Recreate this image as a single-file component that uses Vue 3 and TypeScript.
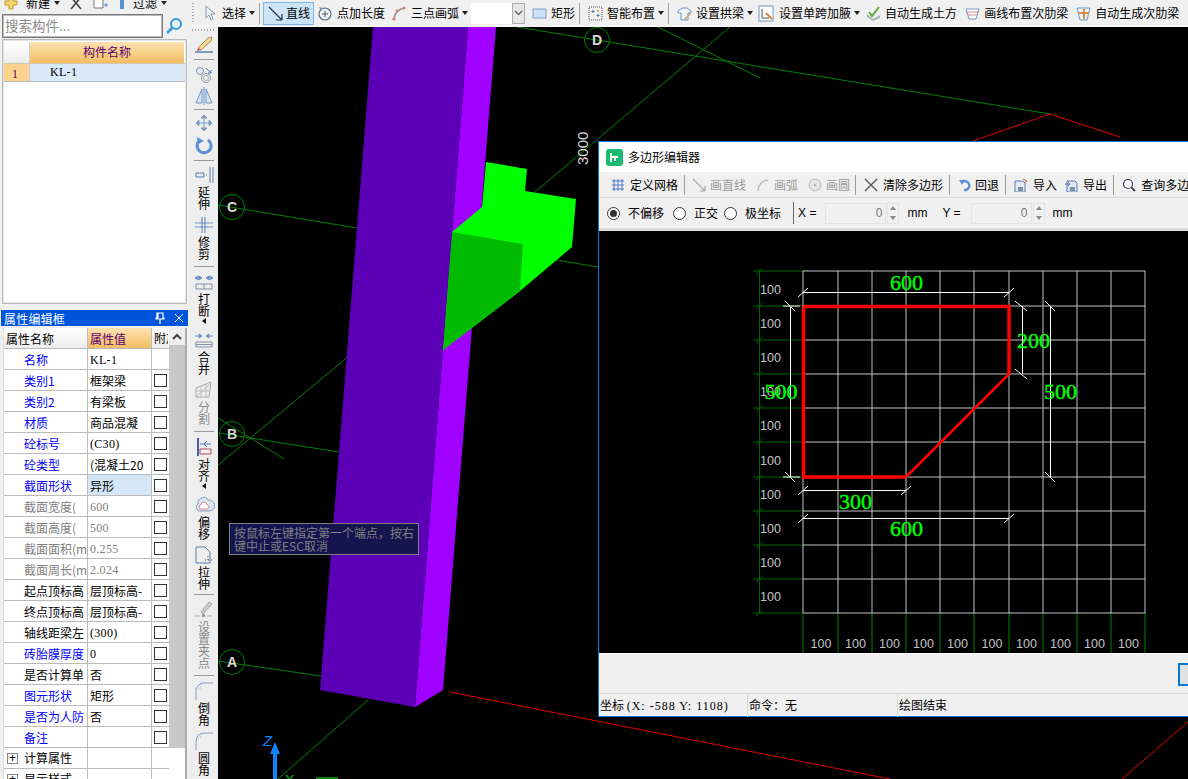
<script setup lang="ts">
const grid = (n: number, s: number, step: number) => Array.from({ length: n }, (_, i) => Math.round(s + i * step))
const gx = [803, 838, 872, 906, 940, 974, 1009, 1043, 1077, 1111, 1145]
const gy = [271, 306, 340, 374, 408, 442, 477, 511, 545, 579, 613]
const rowLabels = grid(10, 294, 34.1)
const colLabels = gx.slice(0, 10).map((x, i) => (x + gx[i + 1]) / 2)

type Row = { n: string; c: string; v: string; mono?: boolean; nocheck?: boolean; sel?: boolean }
const rows: Row[] = [
  { n: '名称', c: 'blue', v: 'KL-1', mono: true, nocheck: true },
  { n: '类别1', c: 'blue', v: '框架梁' },
  { n: '类别2', c: 'blue', v: '有梁板' },
  { n: '材质', c: 'blue', v: '商品混凝' },
  { n: '砼标号', c: 'blue', v: '(C30)', mono: true },
  { n: '砼类型', c: 'blue', v: '(混凝土20' },
  { n: '截面形状', c: 'blue', v: '异形', sel: true },
  { n: '截面宽度(', c: 'grey', v: '600', mono: true },
  { n: '截面高度(', c: 'grey', v: '500', mono: true },
  { n: '截面面积(m', c: 'grey', v: '0.255', mono: true },
  { n: '截面周长(m', c: 'grey', v: '2.024', mono: true },
  { n: '起点顶标高', c: '', v: '层顶标高-' },
  { n: '终点顶标高', c: '', v: '层顶标高-' },
  { n: '轴线距梁左', c: '', v: '(300)', mono: true },
  { n: '砖胎膜厚度', c: 'blue', v: '0', mono: true },
  { n: '是否计算单', c: '', v: '否' },
  { n: '图元形状', c: 'blue', v: '矩形' },
  { n: '是否为人防', c: 'blue', v: '否' },
  { n: '备注', c: 'blue', v: '' },
]

const ic = {
  brush: '<path d="M5 15 L15 5 L19 4 L18 8 L8 17Z" fill="#f4d9a0" stroke="#b98a4a"/><path d="M5 15l3 2-4 1z" fill="#c04a7a"/><path d="M2 19h18" stroke="#5a7fb0" stroke-width="1.5"/>',
  circles: '<circle cx="7" cy="8" r="3.5" fill="#dfe9f5" stroke="#8a96a5"/><circle cx="13" cy="15" r="4.5" fill="none" stroke="#8a96a5"/><circle cx="13" cy="15" r="2.5" fill="none" stroke="#a8b2bf"/><path d="M13 5l5 5m0-3v3h-3" fill="none" stroke="#4a78b8"/>',
  mirror: '<path d="M9 4v14H3zM13 4v14h6z" fill="#dbe6f5" stroke="#6f95c9"/><path d="M11 2v18" stroke="#6f95c9"/>',
  move: '<path d="M11 3v16M3 11h16M11 3l-3 3h6zM11 19l-3-3h6zM3 11l3-3v6zM19 11l-3-3v6z" fill="#6f95c9" stroke="#7f9cc4"/>',
  rotate: '<path d="M6 7a7 7 0 1 0 9-1" fill="none" stroke="#5b8fd6" stroke-width="3"/><path d="M4 3l1 7 6-3z" fill="#5b8fd6"/>',
  extend: '<path d="M3 9h8v4H3z" fill="none" stroke="#5a7fb0"/><path d="M13 11h2" stroke="#5a7fb0" stroke-dasharray="1 1"/><path d="M17 3v16M20 3v16" stroke="#5a7fb0"/>',
  trim: '<path d="M2 9h18M2 13h18" stroke="#6f95c9"/><path d="M9 3v16M12 3v16" stroke="#5a7fb0"/>',
  split: '<path d="M2 7h7M13 7h7M2 7l3-2v4zM9 7L6 5v4zM13 7l3-2v4zM20 7l-3-2v4z" fill="#6f95c9" stroke="#6f95c9"/><path d="M3 13h16v5H3zM11 13v5" fill="none" stroke="#7f8ea3"/>',
  merge: '<path d="M2 7h7M13 7h7M9 7L6 5v4zM13 7l3-2v4z" fill="#6f95c9" stroke="#6f95c9"/><path d="M3 13h16v5H3zM3 15.5h16" fill="none" stroke="#7f8ea3"/>',
  cut: '<path d="M3 18V9l15-6-2 15z" fill="#eee" stroke="#aaa"/><path d="M3 12h14M8 8v10M13 6v12M3 18L17 5" stroke="#bbb"/>',
  align: '<path d="M5 2v18" stroke="#4a5fb0" stroke-width="2"/><path d="M7 8h11M14 5l-3 3 3 3" fill="none" stroke="#4a7ac0"/><path d="M7 13h11v5H7z" fill="#eee" stroke="#b04a5a"/>',
  offset: '<path d="M6 17a4 4 0 0 1-1-7 5 5 0 0 1 4-6 4 4 0 0 1 6 2 5 5 0 0 1 2 11z" fill="#dbe6f5" stroke="#7f9cc4"/><path d="M8 15a2 2 0 0 1 0-4 3 3 0 0 1 6 0 2 2 0 0 1 0 4z" fill="#fff" stroke="#e08a80"/>',
  stretch: '<path d="M3 3h9l5 5v11H3z" fill="none" stroke="#5a7fb0"/><path d="M15 12v6M12 16h7" stroke="#444" stroke-dasharray="1 2"/>',
  grip: '<path d="M8 13L16 3l3 2-9 10z" fill="#ccc" stroke="#aaa"/><path d="M2 17h5M14 17h5" stroke="#aaa"/><rect x="9" y="15" width="3" height="3" fill="#999"/>',
  chamfer: '<path d="M3 20V8l5-5h12" fill="none" stroke="#7f9cc4"/><path d="M3 8h5V3" fill="none" stroke="#9fb8d8" stroke-dasharray="1 1"/>',
  fillet: '<path d="M3 20v-8Q3 3 12 3h8" fill="none" stroke="#7f9cc4"/><path d="M3 8h5V3" fill="none" stroke="#9fb8d8" stroke-dasharray="1 1"/>',
}

type V = { k: 'i' | 's'; svg?: string; t?: string; dim?: boolean; arrow?: boolean; cls?: string }
const vtools: V[] = [
  { k: 'i', svg: ic.brush },
  { k: 's' },
  { k: 'i', svg: ic.circles },
  { k: 'i', svg: ic.mirror },
  { k: 's', cls: 'tight' },
  { k: 'i', svg: ic.move },
  { k: 'i', svg: ic.rotate },
  { k: 's' },
  { k: 'i', svg: ic.extend, t: '延伸' },
  { k: 'i', svg: ic.trim, t: '修剪' },
  { k: 's', cls: 'after' },
  { k: 'i', svg: ic.split, t: '打断', arrow: true },
  { k: 'i', svg: ic.merge, t: '合并' },
  { k: 'i', svg: ic.cut, t: '分割', dim: true },
  { k: 's', cls: 'after' },
  { k: 'i', svg: ic.align, t: '对齐', arrow: true },
  { k: 'i', svg: ic.offset, t: '偏移' },
  { k: 'i', svg: ic.stretch, t: '拉伸' },
  { k: 's', cls: 'up' },
  { k: 'i', svg: ic.grip, t: '设置夹点', dim: true },
  { k: 's', cls: 'after' },
  { k: 'i', svg: ic.chamfer, t: '倒角' },
  { k: 'i', svg: ic.fillet, t: '圆角' },
]
</script>

<template>
  <div class="app">
    <aside class="left">
      <div class="lt-top">
        <div class="lt-inner">
          <svg class="lt-plus" width="14" height="14" viewBox="0 0 14 14"><path d="M5 1h4v4h4v4H9v4H5V9H1V5h4z" fill="#f5d36b" stroke="#c79a3a" /></svg>
          <span class="lt-new">新建</span><i class="caret lt-c"></i>
          <svg class="lt-x" width="12" height="14" viewBox="0 0 12 14"><path d="M1 1l10 12M11 1L1 13" stroke="#444" stroke-width="1.6" /></svg>
          <svg class="lt-doc" width="16" height="14" viewBox="0 0 16 14"><path d="M1 0h9v12H1z" fill="#fff" stroke="#777" /><path d="M11 9h4M13 7v4" stroke="#5b8fd6" /></svg>
          <svg class="lt-f" width="6" height="14" viewBox="0 0 6 14"><path d="M1 0h4v13H1z" fill="#5b8fd6" /></svg>
          <span class="lt-filter">过滤</span><i class="caret lt-c"></i>
        </div>
      </div>
      <div class="search">
        <div class="search-box">搜索构件...</div>
        <svg width="20" height="20" viewBox="0 0 20 20"><circle cx="11" cy="8" r="5" fill="#e8f5fd" stroke="#3f9ade" stroke-width="2.2" /><path d="M7 12l-4 4" stroke="#3f9ade" stroke-width="3" stroke-linecap="round" /></svg>
      </div>
      <div class="list">
        <div class="list-head">
          <div class="lh-num"></div>
          <div class="lh-name">构件名称</div>
        </div>
        <div class="list-row">
          <div class="lr-num"><span class="mono">1</span></div>
          <div class="lr-name mono">KL-1</div>
        </div>
      </div>
      <div class="ptitle">
        <span>属性编辑框</span>
        <svg class="pin" width="10" height="12" viewBox="0 0 10 12"><path d="M2 1h6v5h1v1H1V6h1zM5 7v5M3 1v5" fill="none" stroke="#fff" stroke-width="1.2" /></svg>
        <svg width="10" height="10" viewBox="0 0 10 10"><path d="M1 1l8 8M9 1l-8 8" stroke="#fff" /></svg>
      </div>
      <div class="ptable-wrap">
        <div class="ptable">
          <div class="prow phead">
            <div class="pn phn">属性名称</div>
            <div class="pv phv">属性值</div>
            <div class="pc phc">附加</div>
          </div>
          <div v-for="r in rows" :key="r.n" class="prow">
            <div class="pn ind" :class="r.c">{{ r.n }}</div>
            <div class="pv" :class="{ mono: r.mono, sel: r.sel, grey: r.c === 'grey' }">{{ r.v }}</div>
            <div class="pc"><span v-if="!r.nocheck" class="check"></span></div>
          </div>
          <div class="prow">
            <div class="pn group"><span class="plus">+</span>计算属性</div>
            <div class="pv"></div>
            <div class="pc"></div>
          </div>
          <div class="prow">
            <div class="pn group"><span class="plus">+</span>显示样式</div>
            <div class="pv"></div>
            <div class="pc"></div>
          </div>
        </div>
        <div class="pscroll">
          <div class="pscroll-btn"><svg width="10" height="7" viewBox="0 0 10 7"><path d="M1 6l4-4 4 4" fill="none" stroke="#444" stroke-width="2" /></svg></div>
          <div class="pscroll-thumb"></div>
        </div>
      </div>
    </aside>

    <main class="right">
      <header class="top">
        <div class="gripv"></div>
        <div class="item">
          <svg class="i14" viewBox="0 0 14 16"><path d="M3 1v12l3-3 2 5 2-1-2-5h4z" fill="#eef3fa" stroke="#8a9ab0" /></svg>
          <span>选择</span>
        </div>
        <i class="caret"></i>
        <div class="tsep"></div>
        <div class="active-btn">
          <svg width="15" height="15" viewBox="0 0 15 15"><path d="M1 1l13 13M14 14V8M14 14H8" fill="none" stroke="#22364f" stroke-width="1.2" /></svg>
          <span>直线</span>
        </div>
        <div class="item after-btn">
          <svg class="i16" viewBox="0 0 16 16"><circle cx="8" cy="9" r="6" fill="none" stroke="#5c6f85" stroke-width="1.2" /><path d="M8 6v6M5 9h6" stroke="#4a5a70" /><path d="M2 2l4 1-2 3z" fill="#7f9cc4" /></svg>
          <span>点加长度</span>
        </div>
        <div class="item arc-item">
          <svg class="i16" viewBox="0 0 16 16"><path d="M3 14Q4 5 13 3" fill="none" stroke="#8a8f98" stroke-width="1.5" /><circle cx="3" cy="14" r="1.6" fill="#e07a6a" /><circle cx="6" cy="6" r="1.4" fill="#e07a6a" /><circle cx="13" cy="3" r="1.6" fill="#e07a6a" /></svg>
          <span>三点画弧</span>
        </div>
        <i class="caret"></i>
        <div class="combo"><div class="combo-btn"><svg width="9" height="6" viewBox="0 0 9 6"><path d="M1 1l3.5 3.5L8 1" fill="none" stroke="#555" stroke-width="1.2" /></svg></div></div>
        <div class="item after-combo">
          <svg class="i15" viewBox="0 0 15 15"><rect x="1" y="3" width="13" height="9" fill="#cfe0f7" stroke="#7f9cc4" /></svg>
          <span>矩形</span>
        </div>
        <div class="tsep"></div>
        <div class="item">
          <svg class="i15" viewBox="0 0 15 15"><rect x="1" y="1" width="13" height="13" fill="none" stroke="#556" stroke-dasharray="1 1" /><path d="M5 4v3M3.5 5.5h3M10 8v3M8.5 9.5h3" stroke="#4a78b8" /><circle cx="10" cy="5" r="1" fill="#d08a40" /></svg>
          <span>智能布置</span>
        </div>
        <i class="caret"></i>
        <div class="tsep"></div>
        <div class="item">
          <svg class="i15" viewBox="0 0 15 15"><path d="M1 5l4-3h5l4 3v2h-3v7H4V7H1z" fill="#eef3fa" stroke="#6f95c9" /><path d="M7 13l6-6 1 1-6 6z" fill="#c9a060" /></svg>
          <span>设置拱梁</span>
        </div>
        <i class="caret"></i>
        <div class="item after-caret">
          <svg class="i17" viewBox="0 0 17 17"><rect x="1" y="1" width="14" height="15" fill="#fff" stroke="#6f95c9" /><path d="M4 4v9h7" fill="none" stroke="#555" /><path d="M8 8l6 6" stroke="#d08a40" stroke-width="2" /></svg>
          <span>设置单跨加腋</span>
        </div>
        <i class="caret"></i>
        <div class="item after-caret earth">
          <svg class="i15" viewBox="0 0 15 15"><path d="M1 8l6 5 7-4v3l-7 3-6-4z" fill="#aeb6c0" /><path d="M3 6l3 4 7-9" fill="none" stroke="#5fae3a" stroke-width="2" /></svg>
          <span>自动生成土方</span>
        </div>
        <div class="item rib1">
          <svg class="i15" viewBox="0 0 15 15"><path d="M1 3h13l-3 10H4z" fill="#fff" stroke="#6f95c9" /><path d="M1 6h13M3 9h9" stroke="#d08a80" /></svg>
          <span>画线布置次肋梁</span>
        </div>
        <div class="item rib2">
          <svg class="i15" viewBox="0 0 15 15"><path d="M1 2h13l-3 12H4z" fill="#eaf2fb" stroke="#6f95c9" /><path d="M8 3v10M3 7h10" stroke="#d8903f" stroke-width="2" /></svg>
          <span>自动生成次肋梁</span>
        </div>
      </header>

      <div class="work">
        <nav class="vbar">
          <div class="vgrip"></div>
          <template v-for="(v, i) in vtools" :key="i">
            <div v-if="v.k === 's'" class="vsep" :class="v.cls"></div>
            <div v-else class="vitem" :class="{ withtext: v.t, dim: v.dim }">
              <svg width="22" height="22" viewBox="0 0 22 22" v-html="v.svg"></svg>
              <div v-if="v.t" class="vtext">{{ v.t }}</div>
              <div v-if="v.arrow" class="varrow"></div>
            </div>
          </template>
        </nav>

        <section class="canvas">
          <svg class="scene" width="970" height="752" viewBox="218 27 970 752">
            <g stroke="#008000" fill="none" shape-rendering="auto">
              <path d="M218 205L357 228M557 260L598 267" />
              <path d="M517 27L1050 114" />
              <path d="M658 27L760 78M535 192L730 27" />
              <path d="M219 433L339 452M218 418L284 459M218 465L380 330" />
              <path d="M218 661L321 676M278 779L368 700" />
              <circle cx="232" cy="207" r="12.5" />
              <circle cx="232" cy="434" r="12.5" />
              <circle cx="232" cy="662" r="12.5" />
              <circle cx="597" cy="40" r="12.5" />
            </g>
            <g stroke="#e00000" fill="none">
              <path d="M1050 114L973 141M1050 114L1120 137" />
              <path d="M450 692L890 779M1188 722L1122 779" />
            </g>
            <g class="axisl">
              <text x="232" y="212" text-anchor="middle">C</text>
              <text x="232" y="439" text-anchor="middle">B</text>
              <text x="232" y="667" text-anchor="middle">A</text>
              <text x="597" y="45" text-anchor="middle">D</text>
            </g>
            <text class="dim3000" transform="translate(588 165) rotate(-90)">3000</text>
            <polygon points="468,27 496,27 443,690 415,707" fill="#a000ff" />
            <polygon points="486,162 527,169 525,191 576,199 572,247 520,291 443,350 452,232 482,207" fill="#00ff00" />
            <polygon points="452,232 523,244 520,291 443,350" fill="#00bb00" />
            <polygon points="373,27 468,27 415,707 320,690" fill="#5c00b8" />
            <text class="zlab" x="263" y="746">Z</text>
            <path d="M273 779V754h-3l5-12 5 12h-3v25z" fill="#0a84ff" />
            <text class="xlab" x="285" y="785">X</text>
            <path d="M316 778h22" stroke="#008000" stroke-width="2" />
          </svg>

          <div class="tip">按鼠标左键指定第一个端点，按右<br />键中止或ESC取消</div>

          <div class="dialog">
            <div class="d-title">
              <svg width="17" height="17" viewBox="0 0 17 17"><rect width="17" height="17" rx="3" fill="#1dbb70" /><path d="M5 4v9M5 8h7M9 8v4" stroke="#fff" stroke-width="1.8" fill="none" /></svg>
              <span>多边形编辑器</span>
            </div>
            <div class="d-tools">
              <div class="d-grip"></div>
              <div class="ditem">
                <svg class="d14" viewBox="0 0 14 14"><path d="M1 3h12M1 7h12M1 11h12M3 1v12M7 1v12M11 1v12" stroke="#4a78c8" /></svg>
                <span>定义网格</span>
              </div>
              <div class="dsep"></div>
              <div class="ditem off">
                <svg class="d14" viewBox="0 0 14 14"><path d="M1 1l12 12M13 13V8M13 13H8" fill="none" stroke="#aaa" stroke-width="1.2" /></svg>
                <span>画直线</span>
              </div>
              <div class="ditem off">
                <svg class="d14" viewBox="0 0 14 14"><path d="M2 13Q3 3 12 2" fill="none" stroke="#bbb" stroke-width="1.4" /></svg>
                <span>画弧</span>
              </div>
              <div class="ditem off">
                <svg class="d14" viewBox="0 0 14 14"><circle cx="7" cy="7" r="6" fill="#e4e4e4" stroke="#bbb" /><circle cx="7" cy="7" r="1" fill="#aaa" /></svg>
                <span>画圆</span>
              </div>
              <div class="dsep tightl"></div>
              <div class="ditem">
                <svg class="d14" viewBox="0 0 14 14"><path d="M1 1l12 12M13 1L1 13" stroke="#555" stroke-width="1.4" /></svg>
                <span>清除多边形</span>
              </div>
              <div class="dsep"></div>
              <div class="ditem undo">
                <svg class="d14" viewBox="0 0 14 14"><path d="M4 4a4.5 4.5 0 1 1 2 8" fill="none" stroke="#5b8fd6" stroke-width="2.4" /><path d="M1 2l6 0-3 5z" fill="#5b8fd6" /></svg>
                <span>回退</span>
              </div>
              <div class="dsep"></div>
              <div class="ditem io">
                <svg class="d14" viewBox="0 0 14 14"><path d="M1 3h8l2 2v9H1z" fill="#dfe8f5" stroke="#5a7fb0" /><rect x="4" y="9" width="5" height="4" fill="#7f8ea3" /><path d="M9 1l4 2-3 2" fill="none" stroke="#c06a50" /></svg>
                <span>导入</span>
              </div>
              <div class="ditem">
                <svg class="d14" viewBox="0 0 14 14"><path d="M3 3h8l2 2v9H3z" fill="#dfe8f5" stroke="#5a7fb0" /><rect x="6" y="9" width="5" height="4" fill="#7f8ea3" /><path d="M1 6h5M4 4l2 2-2 2" fill="none" stroke="#4a78c8" /></svg>
                <span>导出</span>
              </div>
              <div class="dsep"></div>
              <div class="ditem">
                <svg class="d14" viewBox="0 0 14 14"><circle cx="6" cy="6" r="4.5" fill="#f4f8fc" stroke="#445" stroke-width="1.2" /><path d="M9.5 9.5L13 13" stroke="#445" stroke-width="2" /></svg>
                <span>查询多边形</span>
              </div>
            </div>
            <div class="d-opts">
              <div class="opt"><span class="radio on"></span><span>不偏移</span></div>
              <div class="opt"><span class="radio"></span><span>正交</span></div>
              <div class="opt narrow"><span class="radio"></span><span>极坐标</span></div>
              <div class="dsep2"></div>
              <span class="lat xl">X =</span>
              <div class="num">0</div>
              <div class="spin"><svg width="6" height="4" viewBox="0 0 6 4"><path d="M0 4l3-4 3 4z" fill="#888" /></svg><svg width="6" height="4" viewBox="0 0 6 4"><path d="M0 0l3 4 3-4z" fill="#888" /></svg></div>
              <span class="lat mm">mm</span>
              <span class="lat yl">Y =</span>
              <div class="num">0</div>
              <div class="spin"><svg width="6" height="4" viewBox="0 0 6 4"><path d="M0 4l3-4 3 4z" fill="#888" /></svg><svg width="6" height="4" viewBox="0 0 6 4"><path d="M0 0l3 4 3-4z" fill="#888" /></svg></div>
              <span class="lat mm">mm</span>
            </div>
            <div class="d-canvas">
              <svg width="589" height="422" viewBox="599 231 589 422">
                <g stroke="#006400" fill="none">
                  <path d="M759.5 271V613" />
                  <path v-for="y in gy" :key="'gt' + y" :d="`M753 ${y}H803M756 ${y + 3}L763 ${y - 3}`" />
                </g>
                <g stroke="#008000">
                  <path v-for="x in gx" :key="'gb' + x" :d="`M${x} 613V653`" />
                </g>
                <g stroke="#c4c4c4">
                  <path v-for="x in gx" :key="'v' + x" :d="`M${x} 271V613`" />
                  <path v-for="y in gy" :key="'h' + y" :d="`M803 ${y}H1145`" />
                </g>
                <g class="lab">
                  <text v-for="y in rowLabels" :key="'rl' + y" x="760" :y="y">100</text>
                  <text v-for="x in colLabels" :key="'cl' + x" :x="x - 10" y="648">100</text>
                </g>
                <path d="M803.5 306.5H1009V374" fill="none" stroke="#ff0000" stroke-width="3.5" />
                <path d="M1009 374L906 477" fill="none" stroke="#ff0000" stroke-width="2.6" />
                <path d="M906 477H803.5V306.5" fill="none" stroke="#ff0000" stroke-width="3.5" />
                <g stroke="#fff" fill="none">
                  <path d="M803 292.5H1009M798 297L808 288M1004 297L1014 288" />
                  <path d="M790.5 306V477M783 306H800M785 301L795 311M783 477H800M785 472L795 482" />
                  <path d="M1022.5 306V374M1015 301L1027 311M1015 369L1027 379" />
                  <path d="M1050.5 306V477M1045 301L1055 311M1045 472L1055 482" />
                  <path d="M803 490.5H906M798 495L808 486M901 495L911 486" />
                  <path d="M803 518.5H1009M798 523L808 514M1004 523L1014 514" />
                </g>
                <g class="dimt">
                  <text x="906.5" y="290" text-anchor="middle">600</text>
                  <text x="1033.5" y="348" text-anchor="middle">200</text>
                  <text x="781" y="399" text-anchor="middle">500</text>
                  <text x="1060.5" y="399" text-anchor="middle">500</text>
                  <text x="855.5" y="509" text-anchor="middle">300</text>
                  <text x="906.5" y="536" text-anchor="middle">600</text>
                </g>
              </svg>
            </div>
            <div class="d-foot"><div class="d-btn"></div></div>
            <div class="d-status">
              <div class="st st1">坐标 <span class="coord">(X: -588 Y: 1108)</span></div>
              <div class="st st2">命令：无</div>
              <div class="st">绘图结束</div>
            </div>
          </div>
        </section>
      </div>
    </main>
  </div>
</template>

<style>
html, body { margin: 0; overflow: hidden; background: #000; }
</style>

<style scoped>
.app {
  width: 1188px; height: 779px; display: flex; overflow: hidden; background: #f0f0f0;
  font: 12px/16px "Noto Sans CJK SC", "Liberation Sans", sans-serif; color: #000;
}
.mono { font-family: "Liberation Serif", serif; font-size: 12px; letter-spacing: .3px; }
.coord { font-family: "Liberation Serif", serif; font-size: 12px; letter-spacing: 1px; }
.caret { display: block; width: 0; height: 0; border: 3px solid transparent; border-top: 4px solid #222; border-bottom: 0; margin-left: 3px; flex: none; }

/* left */
.left { width: 190px; flex: none; display: flex; flex-direction: column; overflow: hidden; background: #f0f0f0; }
.lt-top { height: 13px; display: flex; align-items: flex-end; overflow: hidden; flex: none; }
.lt-inner { height: 20px; display: flex; align-items: center; flex: none; padding-left: 4px; }
.lt-plus { flex: none; margin-right: 8px; }
.lt-new { width: 24px; white-space: nowrap; }
.lt-c { margin-left: 4px; }
.lt-x { margin-left: 10px; flex: none; }
.lt-doc { margin-left: 11px; flex: none; }
.lt-f { margin-left: 10px; flex: none; }
.lt-filter { margin-left: 8px; }
.search { height: 26px; display: flex; align-items: center; padding-left: 2px; gap: 2px; flex: none; box-sizing: border-box; }
.search-box { width: 161px; height: 24px; box-sizing: border-box; border: 1px solid #777; box-shadow: inset 0 0 0 1px #bbb; background: #fff; color: #8a8a8a; font-size: 13.5px; line-height: 21px; padding-left: 2px; }
.list { width: 185px; height: 265px; margin-left: 2px; box-sizing: border-box; border: 1px solid #bbb; box-shadow: inset 0 0 0 1px #e4e4e4; background: #fff; padding: 2px 2px 0 1px; flex: none; }
.list-head, .list-row { display: flex; }
.list-head { height: 21px; }
.lh-num { width: 26px; background: linear-gradient(#fff, #ececec); border-right: 1px solid #ccc; box-sizing: border-box; }
.lh-name { width: 155px; background: linear-gradient(#fde2b0, #f2bd62); color: #5a0070; text-align: center; line-height: 20px; font-size: 12px; }
.list-row { height: 19px; border-bottom: 1px solid #bbb; border-top: 1px solid #d0c8b0; box-sizing: border-box; width: 181px; }
.lr-num { width: 26px; background: #fdd28e; color: #600060; padding-left: 8px; box-sizing: border-box; line-height: 17px; border-right: 1px solid #ccc; }
.lr-name { width: 155px; background: #d9e9f8; padding-left: 20px; box-sizing: border-box; line-height: 17px; }

.ptitle { height: 16px; margin: 6px 2px 0 1px; background: #0055dd; color: #fff; font-size: 12px; line-height: 13px; display: flex; align-items: center; padding: 0 4px 0 3px; flex: none; }
.ptitle span { flex: 1; letter-spacing: .2px; }
.pin { margin-right: 9px; }
.ptable-wrap { margin: 2px 0 0 3px; width: 184px; display: flex; flex: 1; overflow: hidden; background: #fff; border-left: 1px solid #ddd; box-sizing: border-box; border-right: 2px solid #aaa; }
.ptable { width: 165px; flex: none; }
.prow { display: grid; grid-template-columns: 84px 64px 16px; height: 21px; border-bottom: 1px solid #bbb; box-sizing: border-box; }
.phead { height: 21px; }
.pn, .pv, .pc { overflow: hidden; white-space: nowrap; line-height: 22px; box-sizing: border-box; }
.pn, .pv { border-right: 1px solid #bbb; }
.phn { background: linear-gradient(#fff, #ececec); padding-left: 2px; }
.phv { background: linear-gradient(#fde2b0, #f2bd62); color: #5a0070; padding-left: 2px; }
.phc { background: linear-gradient(#fff, #ececec); padding-left: 1px; }
.ind { padding-left: 20px; }
.blue { color: #0000ff; }
.grey { color: #808080; }
.pv { padding-left: 2px; }
.sel { background: #d5e7f7; }
.pc { display: flex; align-items: center; padding-left: 2px; }
.check { display: block; width: 13px; height: 13px; box-sizing: border-box; border: 1px solid #333; background: #fff; }
.group { display: flex; align-items: center; padding-left: 3px; }
.plus { width: 11px; height: 11px; box-sizing: border-box; border: 1px solid #888; line-height: 8px; text-align: center; margin-right: 6px; font-size: 12px; flex: none; font-family: "Liberation Sans", sans-serif; }
.pscroll { width: 16px; flex: none; background: #fff; }
.pscroll-btn { height: 17px; display: flex; align-items: center; justify-content: center; background: #eee; }
.pscroll-thumb { height: 403px; background: #c8c8c8; }

/* right */
.right { flex: 1; display: flex; flex-direction: column; min-width: 0; }
.top { height: 27px; flex: none; box-sizing: border-box; border-bottom: 1px solid #f8f8f8; display: flex; align-items: center; white-space: nowrap; padding-left: 2px; background: #f0f0f0; overflow: hidden; }
.gripv { width: 2px; height: 20px; margin-right: 2px; background: repeating-linear-gradient(#aaa 0 1px, transparent 1px 3px); }
.item { display: flex; align-items: center; gap: 4px; margin-left: 7px; flex: none; }
.i14 { width: 14px; height: 16px; margin-right: 1px; }
.i15 { width: 15px; height: 15px; }
.i16 { width: 16px; height: 16px; }
.i17 { width: 17px; height: 17px; }
.tsep { width: 1px; height: 21px; background: #a0a0a0; margin-left: 4px; flex: none; }
.active-btn { width: 51px; height: 23px; margin-left: 3px; box-sizing: border-box; background: #cce4f7; border: 1px solid #7eb4ea; display: flex; align-items: center; gap: 3px; padding-left: 4px; flex: none; }
.after-btn { margin-left: 3px; }
.arc-item { margin-left: 6px; }
.combo { width: 54px; height: 21px; margin-left: 3px; background: #fff; display: flex; justify-content: flex-end; flex: none; }
.combo-btn { width: 13px; box-sizing: border-box; border: 1px solid #adadad; background: #e6e6e6; display: flex; align-items: center; justify-content: center; }
.after-combo { margin-left: 7px; }
.tsep + .item { margin-left: 8px; }
.after-caret { margin-left: 6px; }
.caret + .after-caret { margin-left: 5px; }
.caret + .after-caret.earth { margin-left: 6px; }
.rib1 { margin-left: 8px; }
.rib2 { margin-left: 8px; }

.work { flex: 1; display: flex; min-height: 0; }
.vbar { width: 28px; flex: none; box-sizing: border-box; background: #eeeeee; display: flex; flex-direction: column; align-items: center; overflow: hidden; }
.vgrip { width: 24px; height: 2px; margin: 2px 0; flex: none; background: repeating-linear-gradient(90deg, #aaa 0 1px, transparent 1px 3px); }
.vitem { display: flex; flex-direction: column; align-items: center; flex: none; }
.vitem svg { display: block; flex: none; }
.withtext { margin-bottom: 4px; }
.vtext { width: 12px; font-size: 12px; line-height: 12px; text-align: center; }
.dim .vtext { color: #8a8a8a; }
.varrow { width: 0; height: 0; margin-top: 1px; border: 3px solid transparent; border-right: 4px solid #111; border-left: 0; flex: none; margin-bottom: 1px; }
.vsep { width: 20px; height: 1px; background: #999; margin: 4px 0 3px; flex: none; }
.vsep.tight { margin: 2px 0; }
.vsep.after { margin: 2px 0 4px; }
.vsep.up { margin: 0 0 4px; }

.canvas { flex: 1; position: relative; background: #000; overflow: hidden; }
.scene { position: absolute; left: 0; top: 0; display: block; }
.axisl text { font: 700 14px "Liberation Sans", sans-serif; fill: #d8d8d8; }
.dim3000 { font: 15px "Liberation Sans", sans-serif; fill: #d8d8d8; }
.zlab { font: italic 15px "Liberation Sans", sans-serif; fill: #0a84ff; }
.xlab { font: 14px "Liberation Sans", sans-serif; fill: #00c000; }
.tip { position: absolute; left: 11px; top: 496px; width: 190px; height: 32px; box-sizing: border-box; background: #14144f; border: 1px solid #808080; color: #808080; font-size: 12px; line-height: 13px; padding: 2px 0 0 4px; white-space: nowrap; overflow: hidden; }

.dialog { position: absolute; left: 380px; top: 114px; width: 600px; height: 576px; box-sizing: border-box; border: 1px solid #0078d7; background: #f0f0f0; display: flex; flex-direction: column; }
.d-title { height: 30px; flex: none; background: #fff; display: flex; align-items: center; padding-left: 7px; gap: 5px; }
.d-tools { height: 26px; flex: none; display: flex; align-items: center; white-space: nowrap; border-bottom: 1px solid #d8d8d8; box-sizing: border-box; }
.d-grip { width: 2px; height: 20px; margin-left: 3px; background: repeating-linear-gradient(#aaa 0 1px, transparent 1px 3px); }
.ditem { display: flex; align-items: center; gap: 5px; margin-left: 7px; flex: none; }
.d-grip + .ditem { margin-left: 9px; }
.dsep + .ditem { margin-left: 8px; }
.ditem.off { color: #9a9a9a; gap: 4px; }
.dsep + .ditem.off { margin-left: 7px; }
.ditem.off + .ditem.off { margin-left: 10px; }
.ditem.undo { gap: 3px; }
.d14 { width: 14px; height: 14px; flex: none; }
.dsep { width: 1px; height: 20px; background: #999; margin-left: 6px; flex: none; }
.dsep.tightl { margin-left: 5px; }
.d-opts { height: 30px; flex: none; display: flex; align-items: center; padding-left: 8px; white-space: nowrap; border-bottom: 3px solid #dcdcdc; }
.opt { display: flex; align-items: center; gap: 8px; flex: none; }
.opt + .opt { margin-left: 9px; }
.opt.narrow { margin-left: 6px; }
.radio { width: 13px; height: 13px; box-sizing: border-box; border: 1px solid #333; border-radius: 50%; background: #fff; position: relative; display: block; flex: none; }
.radio.on::after { content: ""; position: absolute; inset: 2px; border-radius: 50%; background: #333; }
.dsep2 { width: 1px; height: 22px; background: #666; margin-left: 12px; flex: none; }
.lat { font-family: "Liberation Sans", sans-serif; font-size: 12px; flex: none; }
.xl { margin-left: 4px; }
.yl { margin-left: 15px; }
.mm { margin-left: 8px; }
.num { width: 61px; height: 21px; margin-left: 9px; box-sizing: border-box; border: 1px solid #e3e3e3; background: #f0f0f0; color: #777; text-align: right; padding-right: 3px; line-height: 18px; font-family: "Liberation Sans", sans-serif; font-size: 12px; flex: none; }
.yl + .num { margin-left: 10px; }
.spin { width: 12px; height: 21px; margin-left: 1px; box-sizing: border-box; border: 1px solid #e3e3e3; display: flex; flex-direction: column; align-items: center; justify-content: space-around; flex: none; }
.spin svg { display: block; }
.d-canvas { height: 422px; flex: none; background: #000; overflow: hidden; }
.d-canvas svg { display: block; }
.lab text { font: 12.5px "Liberation Sans", sans-serif; fill: #c4c4c4; }
.dimt text { font: 400 22px "Liberation Serif", serif; fill: #00ff00; stroke: #00ff00; stroke-width: .4px; }
.d-foot { height: 41px; flex: none; border-top: 1px solid #fff; border-bottom: 1px solid #d8d8d8; box-sizing: border-box; position: relative; }
.d-btn { position: absolute; left: 579px; top: 9px; width: 30px; height: 23px; box-sizing: border-box; border: 2px solid #0078d7; background: #e1e1e1; }
.d-status { flex: 1; display: flex; align-items: center; white-space: nowrap; }
.st { height: 100%; line-height: 21px; padding-left: 1px; box-sizing: border-box; }
.st1 { width: 149px; border-right: 1px solid #d8d8d8; }
.st2 { width: 150px; border-right: 1px solid #d8d8d8; }
</style>
